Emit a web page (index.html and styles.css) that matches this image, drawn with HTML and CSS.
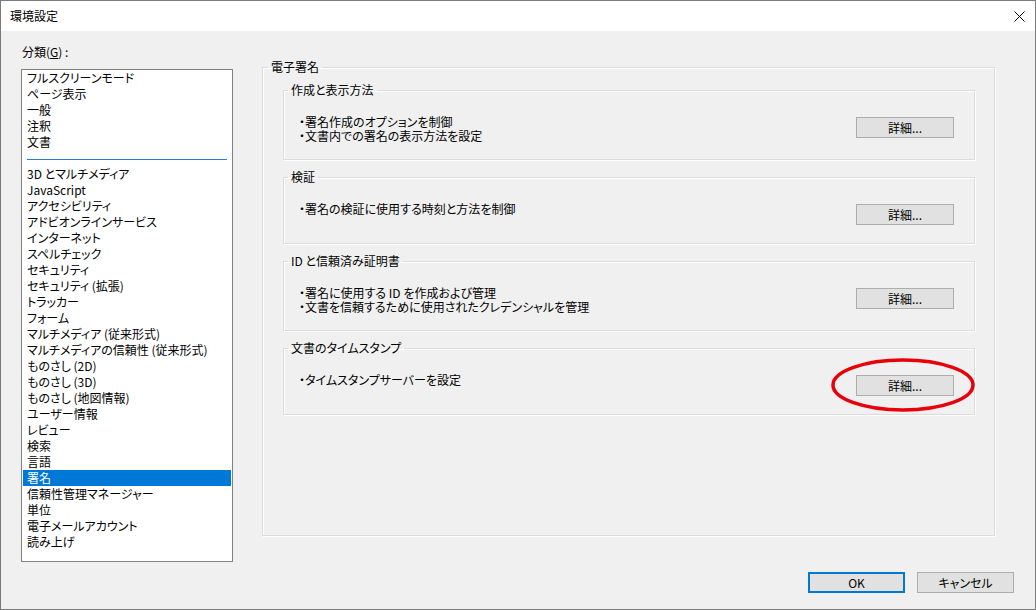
FILE: index.html
```html
<!DOCTYPE html>
<html>
	<head>
		<meta charset="utf-8">
		<title>環境設定</title>
		<link rel="stylesheet" href="styles.css">
	</head>
	<body>

		<div class="window">
			<!-- タイトルバー -->
			<div class="titleBar">
				<span class="titleText">環境設定</span>
				<span class="closeBtn">
					<svg width="11" height="11" viewBox="0 0 11 11">
						<path d="M0.5 0.5 L10.5 10.5 M10.5 0.5 L0.5 10.5" stroke="#000" stroke-width="1" fill="none"/>
					</svg>
				</span>
			</div>

			<div class="dialogBody">
				<div class="mainRow">
					<!-- 分類 -->
					<div class="categoryCol">
						<div class="categoryLabel">分類(<u>G</u>) :</div>
						<ul class="categoryList">
							<li>フルスクリーンモード</li>
							<li>ページ表示</li>
							<li>一般</li>
							<li>注釈</li>
							<li>文書</li>
							<li class="separator"><div class="sepLine"></div></li>
							<li>3D とマルチメディア</li>
							<li>JavaScript</li>
							<li>アクセシビリティ</li>
							<li>アドビオンラインサービス</li>
							<li>インターネット</li>
							<li>スペルチェック</li>
							<li>セキュリティ</li>
							<li>セキュリティ (拡張)</li>
							<li>トラッカー</li>
							<li>フォーム</li>
							<li>マルチメディア (従来形式)</li>
							<li>マルチメディアの信頼性 (従来形式)</li>
							<li>ものさし (2D)</li>
							<li>ものさし (3D)</li>
							<li>ものさし (地図情報)</li>
							<li>ユーザー情報</li>
							<li>レビュー</li>
							<li>検索</li>
							<li>言語</li>
							<li class="selected">署名</li>
							<li>信頼性管理マネージャー</li>
							<li>単位</li>
							<li>電子メールアカウント</li>
							<li>読み上げ</li>
						</ul>
					</div>

					<!-- 電子署名 -->
					<fieldset class="outerGroup">
						<legend>電子署名</legend>
						<div class="groupStack">
							<fieldset class="subGroup">
								<legend>作成と表示方法</legend>
								<div class="groupRow">
									<div class="groupText">
										<p>・署名作成のオプションを制御</p>
										<p>・文書内での署名の表示方法を設定</p>
									</div>
									<button class="dlgBtn detailBtn">詳細...</button>
								</div>
							</fieldset>
							<fieldset class="subGroup">
								<legend>検証</legend>
								<div class="groupRow">
									<div class="groupText">
										<p>・署名の検証に使用する時刻と方法を制御</p>
									</div>
									<button class="dlgBtn detailBtn">詳細...</button>
								</div>
							</fieldset>
							<fieldset class="subGroup">
								<legend>ID と信頼済み証明書</legend>
								<div class="groupRow">
									<div class="groupText">
										<p>・署名に使用する ID を作成および管理</p>
										<p>・文書を信頼するために使用されたクレデンシャルを管理</p>
									</div>
									<button class="dlgBtn detailBtn">詳細...</button>
								</div>
							</fieldset>
							<fieldset class="subGroup">
								<legend>文書のタイムスタンプ</legend>
								<div class="groupRow">
									<div class="groupText">
										<p>・タイムスタンプサーバーを設定</p>
									</div>
									<button class="dlgBtn detailBtn">詳細...</button>
								</div>
							</fieldset>
						</div>
					</fieldset>
				</div>

				<!-- OK / キャンセル -->
				<div class="footerRow">
					<button class="dlgBtn okBtn">OK</button>
					<button class="dlgBtn">キャンセル</button>
				</div>
			</div>

			<!-- 赤丸 -->
			<svg class="markLayer" width="1034" height="608" viewBox="0 0 1034 608">
				<ellipse cx="902" cy="384" rx="70" ry="25" fill="none" stroke="#e8000b" stroke-width="3.5"/>
			</svg>
		</div>

	</body>
</html>
```

FILE: styles.css
```css
* {
	margin: 0;
	padding: 0;
	list-style: none;
	box-sizing: border-box;
}

body {
	background: #f0f0f0;
	font-family: "Noto Sans CJK JP", "Noto Sans", sans-serif;
	font-size: 12px;
	line-height: 16px;
	color: #000;
	font-feature-settings: "palt";
}

.window {
	width: 1036px;
	height: 610px;
	position: relative;
	border: 1px solid #7a7a7a;
	background: #f0f0f0;
}

.titleBar {
	height: 30px;
	background: #fff;
	display: flex;
	align-items: center;
	justify-content: space-between;
	padding: 0 10px 0 9px;
}

.titleBar .closeBtn {
	display: flex;
}

.dialogBody {
	padding-top: 13px;
}

.mainRow {
	display: flex;
	align-items: flex-start;
}

/* 分類 */
.categoryCol {
	padding-left: 20px;
}

.categoryLabel {
	padding-left: 1px;
	margin-bottom: 9px;
}

.categoryList {
	width: 212px;
	height: 493px;
	border: 1px solid #828282;
	background: #fff;
}

.categoryList li {
	height: 16px;
	margin: 0 1px;
	padding-left: 4px;
	white-space: nowrap;
}

.categoryList li.selected {
	background: #0078d7;
	color: #fff;
}

.categoryList li.separator {
	padding: 9px 4px 0 4px;
}

.categoryList .sepLine {
	border-top: 1px solid #2a7bd0;
}

/* 電子署名 */
fieldset {
	border: 1px solid #dcdcdc;
	box-shadow: inset 1px 1px #fff, 1px 1px #fff;
	min-width: 0;
}

legend {
	padding: 0 3px;
	line-height: 16px;
}

.outerGroup {
	width: 733px;
	height: 477px;
	margin: 15px 0 0 29px;
}

.outerGroup > legend {
	margin-left: 5px;
}

.groupStack {
	padding: 7px 19px 0 20px;
}

.subGroup {
	margin-bottom: 9px;
}

.subGroup > legend {
	margin-left: 4px;
}

.groupRow {
	display: flex;
	justify-content: space-between;
	align-items: flex-start;
	padding: 0 20px 16px 15px;
}

.groupText {
	padding-top: 17px;
	line-height: 14px;
}

.dlgBtn {
	width: 97px;
	height: 21px;
	border: 1px solid #adadad;
	background: #e1e1e1;
	font-family: inherit;
	font-size: 12px;
	font-feature-settings: "palt";
	color: #000;
}

.detailBtn {
	width: 98px;
	margin: 19px 0 2px 0;
}

/* フッター */
.footerRow {
	display: flex;
	justify-content: flex-end;
	gap: 12px;
	margin-top: 10px;
	padding-right: 21px;
}

.footerRow .okBtn {
	border: 2px solid #0078d7;
}

.markLayer {
	position: absolute;
	left: 0;
	top: 0;
	pointer-events: none;
}
```
